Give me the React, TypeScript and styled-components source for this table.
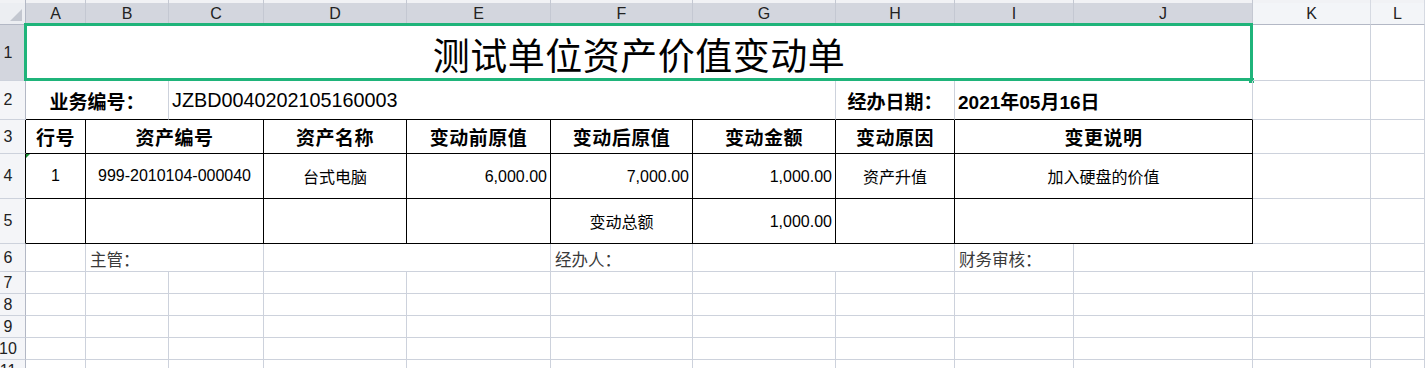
import React from 'react';
import styled, { createGlobalStyle, css } from 'styled-components';

const GRID = '#cdd2dc';
const HEAD_LINE = '#b3b8c5';
const INK = '#000';
const GREEN = '#1fb47a';

const GlobalStyle = createGlobalStyle`
  html, body {
    margin: 0;
    padding: 0;
    background: #fff;
    overflow: hidden;
  }
  body {
    font-family: "Liberation Sans", "Noto Sans CJK SC", sans-serif;
    color: #000;
  }
`;

const Sheet = styled.div`
  display: grid;
  grid-template-columns: 26px 60px 83px 95px 143px 144px 142px 143px 119px 119px 179px 118px 1fr;
  grid-template-rows: 25px 56px 39px 34px 45px 45px 28px repeat(5, 22px);
  width: 1425px;
  height: 368px;
  overflow: hidden;
  background: #fff;
`;

const Corner = styled.div`
  position: relative;
  background: linear-gradient(#f1f2f5 0 3px, #eceef2 3px);
  border-right: 1px solid ${HEAD_LINE};
  border-bottom: 1px solid ${HEAD_LINE};

  &::after {
    content: '';
    position: absolute;
    right: 3px;
    bottom: 3px;
    width: 12px;
    height: 12px;
    background: #c3c7d0;
    clip-path: polygon(100% 0, 100% 100%, 0 100%);
  }
`;

const ColHead = styled.div<{ $sel?: boolean }>`
  display: flex;
  align-items: center;
  justify-content: center;
  padding-top: 3px;
  font-size: 16px;
  color: #222;
  background: linear-gradient(#f1f2f5 0 3px, ${(p) => (p.$sel ? '#d3d6de' : '#f3f5f8')} 3px);
  border-right: 1px solid ${(p) => (p.$sel ? '#c4c8d2' : '#d6dae2')};
  border-bottom: 1px solid ${HEAD_LINE};
`;

const RowHead = styled.div<{ $sel?: boolean; $edge?: boolean }>`
  display: flex;
  align-items: center;
  justify-content: center;
  padding-right: 9px;
  font-size: 16px;
  color: #222;
  white-space: nowrap;
  background: ${(p) => (p.$sel ? '#d3d6de' : '#f4f5f8')};
  border-right: 1px solid ${(p) => (p.$edge ? INK : HEAD_LINE)};
  border-bottom: 1px solid ${GRID};
`;

type CellProps = {
  $span?: number;
  $align?: 'left' | 'center' | 'right';
  $bold?: boolean;
  $size?: number;
  $b?: boolean;
  $r?: boolean;
  $muted?: boolean;
  $flag?: boolean;
};

const Cell = styled.div<CellProps>`
  position: relative;
  grid-column: span ${(p) => p.$span ?? 1};
  display: flex;
  align-items: center;
  justify-content: ${(p) =>
    p.$align === 'left' ? 'flex-start' : p.$align === 'right' ? 'flex-end' : 'center'};
  padding: ${(p) => (p.$align === 'center' || !p.$align ? '0' : '1px 3px 0 3px')};
  font-size: ${(p) => p.$size ?? 16}px;
  font-weight: ${(p) => (p.$bold ? 700 : 400)};
  color: ${(p) => (p.$muted ? '#3a3a3a' : '#000')};
  white-space: nowrap;
  border-right: 1px solid ${(p) => (p.$r ? INK : GRID)};
  border-bottom: 1px solid ${(p) => (p.$b ? INK : GRID)};

  ${(p) =>
    p.$flag &&
    css`
      &::before {
        content: '';
        position: absolute;
        top: 0;
        left: 0;
        border-top: 4px solid #1f8f3a;
        border-right: 4px solid transparent;
      }
    `}
`;

const TCell = styled(Cell).attrs({ $b: true, $r: true })``;

const HeadCell = styled(TCell).attrs({ $bold: true, $size: 19 })`
  letter-spacing: 0.5px;
`;

const Title = styled(Cell)`
  font-size: 37px;
  font-weight: 400;
  letter-spacing: 0.5px;
  padding-top: 2px;

  &::after {
    content: '';
    position: absolute;
    top: -2px;
    left: -2px;
    right: -1px;
    bottom: -1px;
    border: 3px solid ${GREEN};
    pointer-events: none;
  }
`;

const Handle = styled.span`
  position: absolute;
  right: -2px;
  bottom: -3px;
  width: 5px;
  height: 5px;
  background: ${GREEN};
  outline: 1px solid #fff;
`;

const Label = styled(Cell).attrs({ $align: 'left', $muted: true })`
  padding-left: 4px;
  padding-top: 3px;
  font-size: 16.5px;
`;

const letters = ['A', 'B', 'C', 'D', 'E', 'F', 'G', 'H', 'I', 'J', 'K', 'L'];

const Blank = () => <Cell />;

export default function App() {
  return (
    <>
      <GlobalStyle />
      <Sheet>
        {/* column headers */}
        <Corner />
        {letters.map((l, i) => (
          <ColHead key={l} $sel={i < 10}>
            {l}
          </ColHead>
        ))}

        {/* row 1 */}
        <RowHead $sel>1</RowHead>
        <Title $span={10}>
          测试单位资产价值变动单
          <Handle />
        </Title>
        <Blank />
        <Blank />

        {/* row 2 */}
        <RowHead>2</RowHead>
        <Cell $span={2} $bold $size={19} $b>
          业务编号：
        </Cell>
        <Cell $span={5} $align="left" $size={19.8} $b>
          JZBD0040202105160003
        </Cell>
        <Cell $bold $size={19} $b>
          经办日期：
        </Cell>
        <Cell $span={2} $align="left" $bold $size={19} $b>
          2021年05月16日
        </Cell>
        <Blank />
        <Blank />

        {/* row 3 */}
        <RowHead $edge>3</RowHead>
        <HeadCell>行号</HeadCell>
        <HeadCell $span={2}>资产编号</HeadCell>
        <HeadCell>资产名称</HeadCell>
        <HeadCell>变动前原值</HeadCell>
        <HeadCell>变动后原值</HeadCell>
        <HeadCell>变动金额</HeadCell>
        <HeadCell>变动原因</HeadCell>
        <HeadCell $span={2}>变更说明</HeadCell>
        <Blank />
        <Blank />

        {/* row 4 */}
        <RowHead $edge>4</RowHead>
        <TCell $flag>1</TCell>
        <TCell $span={2}>999-2010104-000040</TCell>
        <TCell>台式电脑</TCell>
        <TCell $align="right">6,000.00</TCell>
        <TCell $align="right">7,000.00</TCell>
        <TCell $align="right">1,000.00</TCell>
        <TCell>资产升值</TCell>
        <TCell $span={2}>加入硬盘的价值</TCell>
        <Blank />
        <Blank />

        {/* row 5 */}
        <RowHead $edge>5</RowHead>
        <TCell />
        <TCell $span={2} />
        <TCell />
        <TCell />
        <TCell>变动总额</TCell>
        <TCell $align="right">1,000.00</TCell>
        <TCell />
        <TCell $span={2} />
        <Blank />
        <Blank />

        {/* row 6 */}
        <RowHead>6</RowHead>
        <Cell />
        <Label $span={2}>主管：</Label>
        <Cell $span={2} />
        <Label>经办人：</Label>
        <Cell $span={2} />
        <Label>财务审核：</Label>
        <Cell $span={2} />
        <Blank />

        {/* rows 7-11 */}
        {[7, 8, 9, 10, 11].map((n) => (
          <React.Fragment key={n}>
            <RowHead>{n}</RowHead>
            {letters.map((l) => (
              <Blank key={l} />
            ))}
          </React.Fragment>
        ))}
      </Sheet>
    </>
  );
}
